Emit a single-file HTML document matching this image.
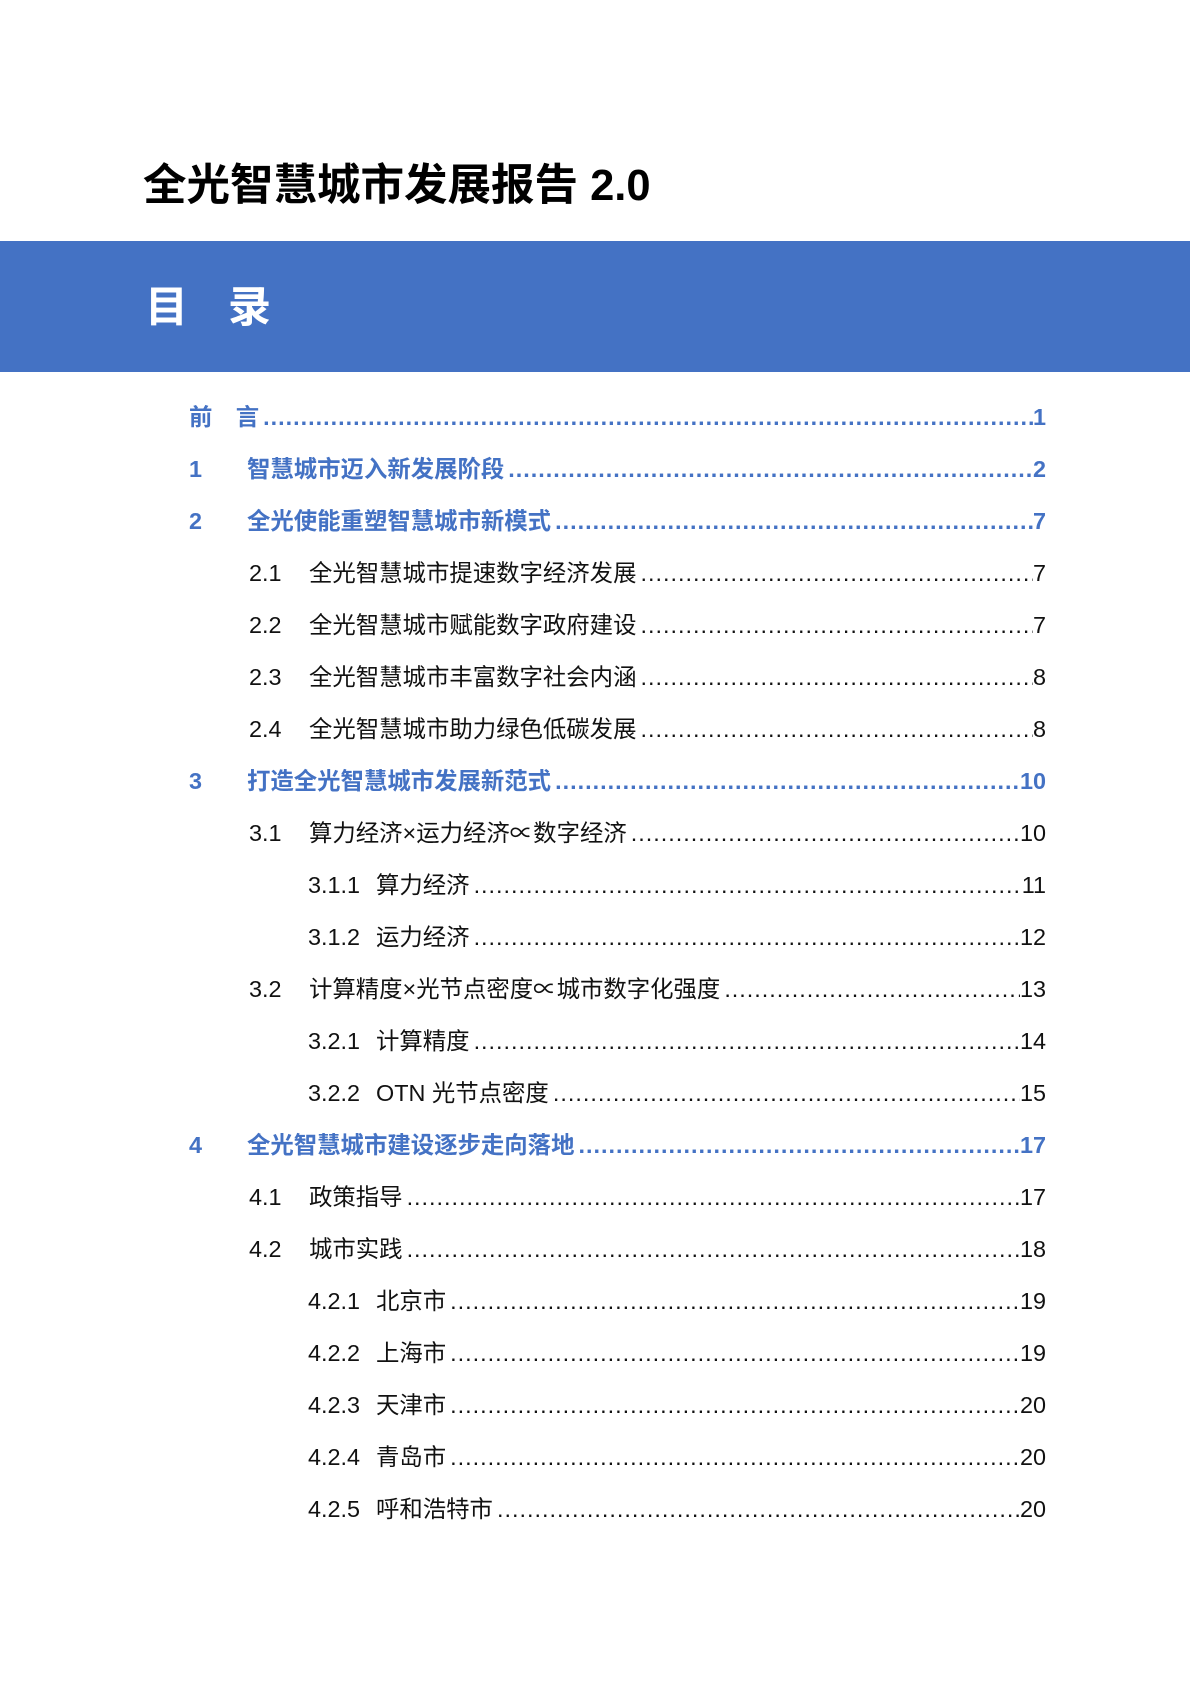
<!DOCTYPE html>
<html><head><meta charset="utf-8"><style>
body{margin:0;width:1190px;height:1683px;background:#fff;font-family:"Liberation Sans","Noto Sans CJK SC",sans-serif;position:relative;overflow:hidden}
.title{position:absolute;left:143px;top:156px;font-size:43.5px;font-weight:bold;color:#000;line-height:60px;white-space:nowrap}
.band{position:absolute;left:0;top:241px;width:1190px;height:131px;background:#4472C4}
.row{position:absolute;left:0;width:1046px;height:30px;line-height:30px;font-size:23.4px;display:flex;white-space:nowrap;color:#111}
.row .n{position:absolute}
.row .lab{position:absolute;display:flex;right:0}
.lead{flex:1;overflow:hidden;letter-spacing:1px;padding:0 4px}
.b{color:#4472C4;font-weight:bold}
</style></head><body>
<div class="title">全光智慧城市发展报告 2.0</div>
<div class="band"></div>
<span style="position:absolute;left:145px;top:273px;color:#fff;font-size:43px;font-weight:bold">目</span>
<span style="position:absolute;left:228px;top:273px;color:#fff;font-size:43px;font-weight:bold">录</span>
<div id="toc"></div>
<script>
var D=".".repeat(400);
var items=[
[1,"","前　言","1"],[1,"1","智慧城市迈入新发展阶段 ","2"],[1,"2","全光使能重塑智慧城市新模式 ","7"],
[2,"2.1","全光智慧城市提速数字经济发展","7"],[2,"2.2","全光智慧城市赋能数字政府建设","7"],[2,"2.3","全光智慧城市丰富数字社会内涵","8"],[2,"2.4","全光智慧城市助力绿色低碳发展","8"],
[1,"3","打造全光智慧城市发展新范式 ","10"],[2,"3.1","算力经济×运力经济∝数字经济 ","10"],[3,"3.1.1","算力经济 ","11"],[3,"3.1.2","运力经济 ","12"],
[2,"3.2","计算精度×光节点密度∝城市数字化强度","13"],[3,"3.2.1","计算精度 ","14"],[3,"3.2.2","OTN 光节点密度","15"],
[1,"4","全光智慧城市建设逐步走向落地 ","17"],[2,"4.1","政策指导 ","17"],[2,"4.2","城市实践 ","18"],
[3,"4.2.1","北京市 ","19"],[3,"4.2.2","上海市 ","19"],[3,"4.2.3","天津市 ","20"],[3,"4.2.4","青岛市 ","20"],[3,"4.2.5","呼和浩特市","20"]];
var h="";
items.forEach(function(it,i){
var top=402+i*52;var l=it[0];
var nx=l==1?189:(l==2?249:308);var tx=l==1?247:(l==2?309:376);
if(i==0)tx=189;
h+='<div class="row'+(l==1?' b':'')+'" style="top:'+top+'px"><span class="n" style="left:'+nx+'px">'+it[1]+'</span><div class="lab" style="left:'+tx+'px"><span>'+it[2]+'</span><span class="lead">'+D+'</span><span>'+it[3]+'</span></div></div>';
});
document.getElementById('toc').innerHTML=h;
</script>
</body></html>
